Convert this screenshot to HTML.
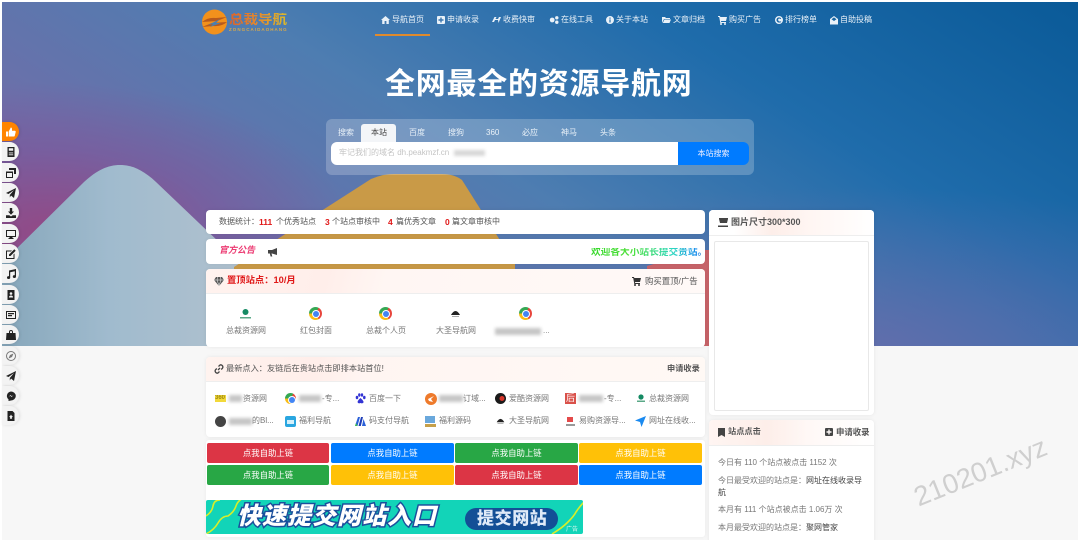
<!DOCTYPE html>
<html lang="zh"><head><meta charset="utf-8"><title>总裁导航</title>
<style>
*{box-sizing:border-box;margin:0;padding:0}
html,body{width:1080px;height:540px;overflow:hidden;background:#f7f7f7}
body{font-family:"Liberation Sans","Noto Sans CJK SC",sans-serif;color:#555}
#p{position:relative;width:1080px;height:540px;overflow:hidden;filter:blur(.3px)}
.a{position:absolute}
.t{position:absolute;white-space:nowrap;line-height:1;font-size:8px}
.w{color:#e9f1f8}
.card{position:absolute;background:#fff;border-radius:4px;box-shadow:0 0 4px rgba(0,0,0,.07)}
.pill{position:absolute;left:2px;width:17px;height:19px;background:#f3f3f3;border-radius:0 9.5px 9.5px 0;box-shadow:1px 0 3px rgba(0,0,0,.1)}
.pill svg{position:absolute;left:4px;top:4.5px;width:10px;height:10px;fill:#222}
.btn{position:absolute;height:20px;width:123px;border-radius:2px;color:#fff;font-size:8.4px;line-height:20px;text-align:center}
.r{background:#dc3545}.b{background:#007bff}.g{background:#28a745}.y{background:#ffc107}
.bl{position:absolute;background:#c6c6c6;filter:blur(1.5px);height:7px}
.chrome{position:absolute;width:13px;height:13px;border-radius:50%;background:conic-gradient(from 30deg,#e8453c 0 120deg,#f9bc15 120deg 240deg,#34a853 240deg 360deg)}
.chrome:after{content:"";position:absolute;left:3.5px;top:3.5px;width:6px;height:6px;border-radius:50%;background:#4285f4;box-shadow:0 0 0 1px #fff}
svg.i{position:absolute;fill:currentColor}
</style></head><body><div id="p">

<!-- hero -->
<div class="a" style="left:2px;top:2px;width:1076px;height:344px;overflow:hidden;background:
 radial-gradient(ellipse 300px 150px at 50px 230px,rgba(150,70,130,.9),rgba(130,80,150,.5) 55%,rgba(110,90,160,0) 100%),
 radial-gradient(ellipse 520px 160px at 850px 345px,rgba(110,105,170,.7),rgba(100,110,170,0) 100%),
 linear-gradient(212deg,#0a5a98 0%,#1f6cab 28%,#4e7db1 52%,#6b70aa 75%,#7a5e9e 100%)">
 <svg width="1076" height="344" viewBox="0 0 1076 344" style="position:absolute;left:0;top:0">
  <defs><linearGradient id="m" x1="0" x2="1" y1="0" y2="0"><stop offset="0" stop-color="#86a6ba"/><stop offset=".45" stop-color="#a0bbce"/><stop offset="1" stop-color="#b0c1ce"/></linearGradient></defs>
  <path d="M-2 263L82 180C95 168 106 163 118 163C130 163 141 168 154 180L240 262V344H-2Z" fill="url(#m)"/>
  <path d="M232 265L369 177Q380 172 392 172H440Q452 172 460 178L513 262V344H232Z" fill="#c99a47"/>
  <path d="M645 264L700 248H720V344H645Z" fill="#c8646a"/>
 </svg>
</div>
<div class="a" style="left:0;top:346px;width:1080px;height:194px;background:#f7f7f7"></div>
<div class="a" style="left:0;top:0;width:2px;height:540px;background:#fff"></div>
<div class="a" style="right:0;top:0;width:2px;height:540px;background:#fff"></div>
<div class="a" style="left:0;top:0;width:1080px;height:2px;background:#fff"></div>

<!-- logo -->
<svg class="a" style="left:202px;top:9px" width="25" height="26" viewBox="0 0 25 26"><circle cx="12.5" cy="13" r="12.5" fill="#f2911c"/><path d="M0 13Q6 8 14 9L25 8 15 12 8 12.5Z" fill="#b85a1c"/><path d="M25 13Q19 18 11 17L0 18 10 14 17 13.5Z" fill="#b85a1c"/><path d="M6 16L18 10 14 14 19 14 8 18 11 15Z" fill="#4a7fae"/></svg>
<div class="t" style="left:229px;top:13px;font-size:14.5px;font-weight:bold;background:linear-gradient(90deg,#d9622c,#e58a2c 50%,#d8b92e);-webkit-background-clip:text;background-clip:text;color:transparent">总裁导航</div>
<div class="t" style="left:229px;top:28px;font-size:4.5px;letter-spacing:1.05px;color:#d9a94a;font-weight:bold">ZONGCAIDAOHANG</div>

<!-- nav -->
<svg class="i w" style="left:381px;top:16px" width="9" height="8" viewBox="0 0 9 8"><path d="M4.5 0L9 4H7.8V8H5.4V5H3.6V8H1.2V4H0Z"/></svg><div class="t w" style="left:392px;top:16px">导航首页</div>
<svg class="i w" style="left:437px;top:16px" width="8" height="8" viewBox="0 0 8 8"><path d="M1 0H7Q8 0 8 1V7Q8 8 7 8H1Q0 8 0 7V1Q0 0 1 0ZM3.3 1.5V3.3H1.5V4.7H3.3V6.5H4.7V4.7H6.5V3.3H4.7V1.5Z"/></svg><div class="t w" style="left:447px;top:16px">申请收录</div>
<svg class="i w" style="left:492px;top:16px" width="9" height="8" viewBox="0 0 9 8"><path d="M0 6L2.5 1H4.5L3.5 3H6L7 1H9L6.5 7 6 4H3L2 6Z"/></svg><div class="t w" style="left:503px;top:16px">收费快审</div>
<svg class="i w" style="left:549px;top:16px" width="10" height="8" viewBox="0 0 10 8"><circle cx="3.2" cy="4" r="2.4"/><circle cx="7.8" cy="1.8" r="1.7"/><circle cx="7.8" cy="6.2" r="1.7"/></svg><div class="t w" style="left:561px;top:16px">在线工具</div>
<svg class="i w" style="left:606px;top:16px" width="8" height="8" viewBox="0 0 8 8"><path d="M4 0a4 4 0 1 0 0 8a4 4 0 1 0 0-8ZM3.4 1.5H4.6V2.7H3.4ZM3.4 3.4H4.6V6.5H3.4Z" fill-rule="evenodd"/></svg><div class="t w" style="left:616px;top:16px">关于本站</div>
<svg class="i w" style="left:662px;top:16px" width="9" height="8" viewBox="0 0 9 8"><path d="M0 1H3L4 2H8V3H2L0 7ZM2.4 3.5H9L7.5 7H.8Z"/></svg><div class="t w" style="left:673px;top:16px">文章归档</div>
<svg class="i w" style="left:718px;top:16px" width="9" height="9" viewBox="0 0 9 9"><path d="M0 0H2L2.3 1H9L8 5H3L3.2 6H8V7H2.3L1.2 1H0Z"/><circle cx="3" cy="8" r="1"/><circle cx="7" cy="8" r="1"/></svg><div class="t w" style="left:729px;top:16px">购买广告</div>
<svg class="i w" style="left:775px;top:16px" width="8" height="8" viewBox="0 0 8 8"><path d="M4 0a4 4 0 1 0 0 8a4 4 0 1 0 0-8ZM5.5 5.3L6.3 6Q5.4 6.6 4 6.6A2.6 2.6 0 1 1 6.2 2.5L5.3 3.1Q4.8 2.5 4 2.5A1.5 1.5 0 1 0 5.5 5.3Z" fill-rule="evenodd"/></svg><div class="t w" style="left:785px;top:16px">排行榜单</div>
<svg class="i w" style="left:830px;top:16px" width="8" height="8.5" viewBox="0 0 8 8.5"><path d="M4 0L8 3V8.5H0V3ZM1.5 3.2L4 5 6.5 3.2 4 1.4Z" fill-rule="evenodd"/></svg><div class="t w" style="left:840px;top:16px">自助投稿</div>
<div class="a" style="left:375px;top:34px;width:55px;height:1.5px;background:#e08a2c"></div>

<!-- title -->
<div class="t" style="left:385px;top:70px;font-size:30px;font-weight:bold;letter-spacing:.75px;color:#fff">全网最全的资源导航网</div>

<!-- search -->
<div class="a" style="left:326px;top:119px;width:428px;height:56px;border-radius:6px;background:rgba(255,255,255,.22)"></div>
<div class="a" style="left:361px;top:124px;width:35px;height:19px;background:#f3f5f8;border-radius:3px 3px 0 0"></div>
<div class="t w" style="left:338px;top:129px">搜索</div>
<div class="t" style="left:371px;top:129px;color:#444">本站</div>
<div class="t w" style="left:409px;top:129px">百度</div>
<div class="t w" style="left:448px;top:129px">搜狗</div>
<div class="t w" style="left:486px;top:129px">360</div>
<div class="t w" style="left:522px;top:129px">必应</div>
<div class="t w" style="left:561px;top:129px">神马</div>
<div class="t w" style="left:600px;top:129px">头条</div>
<div class="a" style="left:331px;top:142px;width:347px;height:23px;background:#fff;border-radius:6px 0 0 6px"></div>
<div class="t" style="left:339px;top:149px;color:#c4c4c4;font-size:8px">牢记我们的域名 dh.peakmzf.cn</div>
<div class="bl" style="left:454px;top:150px;width:31px;height:6px;background:#d8d8d8"></div>
<div class="a" style="left:678px;top:142px;width:71px;height:23px;background:#007bff;border-radius:0 6px 6px 0;color:#eef;font-size:8px;line-height:23px;text-align:center">本站搜索</div>

<!-- sidebar -->
<div class="pill" style="top:122px;background:#ff8400"><svg viewBox="0 0 10 10" style="fill:#fff"><path d="M0 4.5H2V9.5H0ZM2.7 4.5L4.8 .5Q6 .5 6 2V3.7H9Q10 4 9.7 5L8.7 9Q8.5 9.5 8 9.5H2.7Z"/></svg></div>
<div class="pill" style="top:142px"><svg viewBox="0 0 10 10"><path d="M1.5 0H8.5V10H1.5ZM2.8 1.2V3.8H7.2V1.2ZM2.8 5.5V6.4H7.2V5.5ZM2.8 7.4V8.3H7.2V7.4Z" fill-rule="evenodd"/></svg></div>
<div class="pill" style="top:163px"><svg viewBox="0 0 10 10"><path d="M3 0H10V6H8V2H3ZM0 3.5H7V10H0ZM1 5V9H6V5Z" fill-rule="evenodd"/></svg></div>
<div class="pill" style="top:183px"><svg viewBox="0 0 10 10"><path d="M10 0L8 10 5 7.5 3.8 9.5V7L8 2 2.5 6 0 5Z"/></svg></div>
<div class="pill" style="top:203px"><svg viewBox="0 0 10 10"><path d="M3.8 0H6.2V3.5H8L5 6.8 2 3.5H3.8ZM0 7.2H3.3L5 8.5 6.7 7.2H10V10H0Z"/></svg></div>
<div class="pill" style="top:224px"><svg viewBox="0 0 10 10"><path d="M0 1H10V8H6.5V9H7.5V10H2.5V9H3.5V8H0ZM1 2V7H9V2Z" fill-rule="evenodd"/></svg></div>
<div class="pill" style="top:244px"><svg viewBox="0 0 10 10"><path d="M0 1.5H6L5 2.5H1V9H7.5V5.5L8.5 4.5V10H0ZM3 5.5L8.3 .3 9.7 1.7 4.5 7H3Z"/></svg></div>
<div class="pill" style="top:264px"><svg viewBox="0 0 10 10"><path d="M3 1.5L10 0V7.5A1.6 1.4 0 1 1 8.8 6.2V2.2L4.2 3.2V8.5A1.6 1.4 0 1 1 3 7.2Z"/></svg></div>
<div class="pill" style="top:285px"><svg viewBox="0 0 10 10"><path d="M1.5 0H8.5V10H1.5ZM5 2.2A1.3 1.3 0 1 0 5 4.8A1.3 1.3 0 1 0 5 2.2ZM3 7.5H7Q7 5.5 5 5.5T3 7.5Z" fill-rule="evenodd"/></svg></div>
<div class="pill" style="top:305px"><svg viewBox="0 0 10 10"><path d="M0 1H10V9H0ZM1 2V8H9V2ZM2 3H8V4.2H2ZM2 5H6V6.2H2Z" fill-rule="evenodd"/></svg></div>
<div class="pill" style="top:325px"><svg viewBox="0 0 10 10"><path d="M3 3V2Q3 0 5 0T7 2V3H9.5L10 10H0L.5 3ZM4 3H6V2Q6 1 5 1T4 2Z" fill-rule="evenodd"/></svg></div>
<div class="pill" style="top:346px"><svg viewBox="0 0 10 10" style="fill:#777"><path d="M5 0a5 5 0 1 0 0 10a5 5 0 1 0 0-10ZM5 1a4 4 0 1 1 0 8a4 4 0 1 1 0-8ZM7.5 2.5L4 4 2.5 7.5 6 6Z" fill-rule="evenodd"/></svg></div>
<div class="pill" style="top:366px"><svg viewBox="0 0 10 10"><path d="M10 0L8 10 5 7.5 3.8 9.5V7L8 2 2.5 6 0 5Z"/></svg></div>
<div class="pill" style="top:386px"><svg viewBox="0 0 10 10"><path d="M5 .5A4.8 4.5 0 0 1 5 9.5L2.5 10V8.3A4.8 4.5 0 0 1 5 .5ZM2.5 6L4.5 4 5.8 5.2 7.6 4 5.6 6 4.3 4.8Z" fill-rule="evenodd"/></svg></div>
<div class="pill" style="top:406px"><svg viewBox="0 0 10 10"><path d="M1.5 0H6.5L8.5 2V10H1.5ZM5 3.5L4 5.3H3L4.2 6.6 3.8 8.2 5 7.4 6.2 8.2 5.8 6.6 7 5.3H6Z" fill-rule="evenodd"/></svg></div>

<!-- stats -->
<div class="card" style="left:206px;top:210px;width:499px;height:24px"></div>
<div class="t" style="left:219px;top:218px">数据统计：</div>
<div class="t" style="left:259px;top:218px;color:#e01818;font-weight:bold;font-size:8.5px">111</div>
<div class="t" style="left:276px;top:218px">个优秀站点</div>
<div class="t" style="left:325px;top:218px;color:#e01818;font-weight:bold;font-size:8.5px">3</div>
<div class="t" style="left:332px;top:218px">个站点审核中</div>
<div class="t" style="left:388px;top:218px;color:#e01818;font-weight:bold;font-size:8.5px">4</div>
<div class="t" style="left:396px;top:218px">篇优秀文章</div>
<div class="t" style="left:445px;top:218px;color:#e01818;font-weight:bold;font-size:8.5px">0</div>
<div class="t" style="left:452px;top:218px">篇文章审核中</div>

<!-- notice -->
<div class="card" style="left:206px;top:239px;width:499px;height:25px"></div>
<div class="t" style="left:219px;top:246px;font-size:9px;font-weight:bold;font-style:italic;color:#ec3a72">官方公告</div>
<svg class="i" style="left:268px;top:248px;color:#444" width="9" height="9" viewBox="0 0 9 9"><path d="M9 0V7L4 5.5H3.5L4.3 8.5H2.6L1.8 5.5H0V2H4Z"/></svg>
<div class="t" style="left:591px;top:248px;font-size:9.7px;font-weight:bold;background:linear-gradient(90deg,#35d82a,#4ee03a 35%,#2fd8c0 70%,#1a8af0 92%,#777);-webkit-background-clip:text;background-clip:text;color:transparent">欢迎各大小站长提交贵站。</div>

<!-- pinned -->
<div class="card" style="left:206px;top:269px;width:499px;height:78px"></div>
<div class="a" style="left:206px;top:269px;width:499px;height:25px;border-radius:4px 4px 0 0;border-bottom:1px solid #eee;background:linear-gradient(105deg,#fff3ef 0%,#ffeeea 24%,#fff6f3 36%,#fff9f7 100%)"></div>
<svg class="i" style="left:214px;top:277px;color:#555" width="10" height="9" viewBox="0 0 10 9"><path d="M2 0H8L10 3 5 9 0 3Z"/><path d="M0 3H10M3.5 0L3 3 5 8.5 7 3 6.5 0" stroke="#fff" stroke-width=".5" fill="none"/></svg>
<div class="t" style="left:227px;top:276px;font-size:9.3px;font-weight:bold;color:#e01818">置顶站点：10/月</div>
<svg class="i" style="left:632px;top:277px;color:#333" width="9" height="9" viewBox="0 0 9 9"><path d="M0 0H2L2.3 1H9L8 5H3L3.2 6H8V7H2.3L1.2 1H0Z"/><circle cx="3" cy="8" r="1"/><circle cx="7" cy="8" r="1"/></svg>
<div class="t" style="left:645px;top:277px;font-size:8.4px">购买置顶/广告</div>
<svg class="a" style="left:239px;top:307px" width="13" height="13" viewBox="0 0 13 13"><circle cx="6.5" cy="5" r="3" fill="#148a63"/><path d="M1 10H12V11.5H1Z" fill="#5aa887"/></svg>
<div class="t" style="left:226px;top:327px;color:#777">总裁资源网</div>
<div class="chrome" style="left:309px;top:307px"></div>
<div class="t" style="left:300px;top:327px;color:#777">红包封面</div>
<div class="chrome" style="left:379px;top:307px"></div>
<div class="t" style="left:366px;top:327px;color:#777">总裁个人页</div>
<svg class="a" style="left:449px;top:308px" width="13" height="11" viewBox="0 0 13 11"><path d="M2 7Q6.5-1 11 7Z" fill="#222"/><path d="M3 8H10V9H3Z" fill="#aaa"/></svg>
<div class="t" style="left:436px;top:327px;color:#777">大圣导航网</div>
<div class="chrome" style="left:519px;top:307px"></div>
<div class="bl" style="left:495px;top:328px;width:46px"></div>
<div class="t" style="left:543px;top:327px;color:#888">...</div>

<!-- newest -->
<div class="card" style="left:206px;top:357px;width:499px;height:80px"></div>
<div class="a" style="left:206px;top:357px;width:499px;height:25px;border-radius:4px 4px 0 0;border-bottom:1px solid #eee;background:linear-gradient(100deg,#fff3ef 0%,#ffeeea 22%,#fff5f2 32%,#fff9f5 100%)"></div>
<svg class="a" style="left:214px;top:364px" width="10" height="10" viewBox="0 0 10 10" fill="none" stroke="#444" stroke-width="1.3"><path d="M4 6L6 4M4.5 2.5L5.8 1.2Q7 .3 8.2 1.5T8.5 4.2L7.2 5.5M5.5 7.5L4.2 8.8Q3 9.7 1.8 8.5T1.5 5.8L2.8 4.5"/></svg>
<div class="t" style="left:226px;top:365px;font-size:8.2px">最新点入：友链后在贵站点击即排本站首位!</div>
<div class="t" style="left:667px;top:365px;font-size:8.2px;font-weight:bold;color:#555">申请收录</div>

<!-- link rows -->
<div class="t" style="left:215px;top:395px;font-size:6px;font-weight:bold;color:#a08a10;background:#f2d93a;width:11px;height:7px;line-height:7px;overflow:hidden">360</div>
<div class="bl" style="left:229px;top:395px;width:13px"></div><div class="t" style="left:243px;top:395px;color:#777">资源网</div>
<div class="chrome" style="left:285px;top:393px;width:11px;height:11px"></div>
<div class="bl" style="left:299px;top:395px;width:22px"></div><div class="t" style="left:322px;top:395px;color:#777">-专...</div>
<svg class="a" style="left:355px;top:393px" width="11" height="11" viewBox="0 0 11 11" fill="#3334d4"><ellipse cx="2" cy="4.5" rx="1.3" ry="1.7"/><ellipse cx="4.3" cy="2" rx="1.2" ry="1.7"/><ellipse cx="7" cy="2" rx="1.2" ry="1.7"/><ellipse cx="9.3" cy="4.5" rx="1.3" ry="1.7"/><path d="M5.5 5Q3 7 2.5 9Q3 11 5.5 10Q8 11 8.7 9Q8 7 5.5 5Z"/></svg>
<div class="t" style="left:369px;top:395px;color:#777">百度一下</div>
<svg class="a" style="left:425px;top:393px" width="12" height="12" viewBox="0 0 12 12"><circle cx="6" cy="6" r="6" fill="#ee7a2b"/><path d="M3 6L9 3 6 6 8 9 4 8Z" fill="#fff"/></svg>
<div class="bl" style="left:439px;top:395px;width:24px"></div><div class="t" style="left:463px;top:395px;color:#777">订域...</div>
<svg class="a" style="left:495px;top:393px" width="11" height="11" viewBox="0 0 11 11"><circle cx="5.5" cy="5.5" r="5.5" fill="#1a1a1a"/><circle cx="7" cy="5.5" r="2.5" fill="#d8352a"/></svg>
<div class="t" style="left:509px;top:395px;color:#777">爱酷资源网</div>
<div class="a" style="left:565px;top:393px;width:11px;height:11px;background:#d9514a;color:#fff;font-size:9px;line-height:11px;text-align:center">后</div>
<div class="bl" style="left:579px;top:395px;width:24px"></div><div class="t" style="left:604px;top:395px;color:#777">-专...</div>
<svg class="a" style="left:636px;top:393px" width="10" height="10" viewBox="0 0 10 10"><circle cx="5" cy="4" r="2.6" fill="#148a63"/><path d="M1 7.5H9V9H1Z" fill="#5aa887"/></svg>
<div class="t" style="left:649px;top:395px;color:#777">总裁资源网</div>

<div class="a" style="left:215px;top:416px;width:11px;height:11px;border-radius:50%;background:#444"></div>
<div class="bl" style="left:229px;top:418px;width:23px"></div><div class="t" style="left:252px;top:417px;color:#777">的Bl...</div>
<div class="a" style="left:285px;top:416px;width:11px;height:11px;border-radius:2px;background:#2aa6e0"></div><div class="a" style="left:287px;top:420px;width:7px;height:4px;background:#d4f0fb"></div>
<div class="t" style="left:299px;top:417px;color:#777">福利导航</div>
<svg class="a" style="left:355px;top:416px" width="11" height="11" viewBox="0 0 11 11"><path d="M0 10L3 1H5L2.5 10Z" fill="#2a60d8"/><path d="M3.5 10L6 1H8L5.8 10Z" fill="#1f3fb8"/><path d="M7 10L8.5 3 11 10Z" fill="#2a60d8"/><path d="M0 10L1 7 2.5 10Z" fill="#3fc04a"/></svg>
<div class="t" style="left:369px;top:417px;color:#777">码支付导航</div>
<div class="a" style="left:425px;top:416px;width:10px;height:7px;background:#6aa8dc"></div><div class="a" style="left:425px;top:424px;width:11px;height:3px;background:#c6a04a"></div>
<div class="t" style="left:439px;top:417px;color:#777">福利源码</div>
<svg class="a" style="left:495px;top:416px" width="11" height="10" viewBox="0 0 13 11"><path d="M2 7Q6.5-1 11 7Z" fill="#222"/><path d="M3 8H10V9H3Z" fill="#aaa"/></svg>
<div class="t" style="left:509px;top:417px;color:#777">大圣导航网</div>
<div class="a" style="left:567px;top:417px;width:6px;height:5px;background:#e44a4a"></div><div class="a" style="left:566px;top:424px;width:9px;height:2px;background:#999"></div>
<div class="t" style="left:579px;top:417px;color:#777">易购资源导...</div>
<svg class="a" style="left:635px;top:416px" width="11" height="11" viewBox="0 0 11 11"><path d="M11 0L6.5 11 5 6 0 4.5Z" fill="#1a8af0"/></svg>
<div class="t" style="left:649px;top:417px;color:#777">网址在线收...</div>

<!-- buttons -->
<div class="a" style="left:206px;top:440px;width:499px;height:97px;background:#fff;border-radius:3px;box-shadow:0 0 4px rgba(0,0,0,.06)"></div>
<div class="btn r" style="left:207px;top:443px;width:122px">点我自助上链</div>
<div class="btn b" style="left:331px;top:443px">点我自助上链</div>
<div class="btn g" style="left:455px;top:443px">点我自助上链</div>
<div class="btn y" style="left:579px;top:443px">点我自助上链</div>
<div class="btn g" style="left:207px;top:465px;width:122px">点我自助上链</div>
<div class="btn y" style="left:331px;top:465px">点我自助上链</div>
<div class="btn r" style="left:455px;top:465px">点我自助上链</div>
<div class="btn b" style="left:579px;top:465px">点我自助上链</div>

<!-- banner -->
<div class="a" style="left:206px;top:500px;width:377px;height:34px;background:#12d4b8;border-radius:2px;overflow:hidden">
 <svg class="a" style="left:0;top:0" width="377" height="34" viewBox="0 0 377 34" fill="none" stroke="#d8ee2a" stroke-width="1.6"><path d="M0 16Q6 12 7 6T14 0M0 34Q8 30 12 23T22 16Q28 12 30 6T38-2"/><path d="M346 34Q356 28 362 22T370 12Q374 6 378 2"/></svg>
 <div class="t" style="left:31px;top:5px;font-size:24px;font-weight:900;font-style:italic;letter-spacing:1px;color:#fff;-webkit-text-stroke:3px #1b4f9c;paint-order:stroke fill;text-shadow:1px 1px 0 #1b4f9c">快速提交网站入口</div>
 <div class="a" style="left:259px;top:8px;width:93px;height:22px;border-radius:11px;background:#134f96"></div>
 <div class="t" style="left:271px;top:10px;font-size:17px;font-weight:900;letter-spacing:.6px;color:#dfeaf8">提交网站</div>
 <div class="t" style="left:360px;top:27px;font-size:6px;color:#d8f8f0">广告</div>
</div>

<!-- right col -->
<div class="card" style="left:709px;top:210px;width:165px;height:205px"></div>
<div class="a" style="left:709px;top:210px;width:165px;height:26px;border-radius:4px 4px 0 0;border-bottom:1px solid #eee;background:linear-gradient(90deg,#fff 0%,#fff 15%,#fdeee9 38%,#fff6f3 62%,#fff 100%)"></div>
<svg class="i" style="left:718px;top:218px;color:#444" width="10" height="9" viewBox="0 0 10 9"><path d="M1 0H10V1L9 5H2L1 1ZM0 7.5H10V9H0Z"/></svg>
<div class="t" style="left:731px;top:218px;font-size:9px;font-weight:bold">图片尺寸300*300</div>
<div class="a" style="left:714px;top:241px;width:155px;height:170px;background:#fff;border:1px solid #e8e8e8;border-radius:2px"></div>

<div class="card" style="left:709px;top:420px;width:165px;height:125px"></div>
<div class="a" style="left:709px;top:420px;width:165px;height:26px;border-radius:4px 4px 0 0;border-bottom:1px solid #eee;background:linear-gradient(90deg,#fff5f2 0%,#fdeee9 35%,#fff8f6 60%,#fff 100%)"></div>
<svg class="i" style="left:718px;top:428px;color:#444" width="7" height="9" viewBox="0 0 7 9"><path d="M0 0H7V9L3.5 7 0 9Z"/></svg>
<div class="t" style="left:728px;top:428px;font-size:8.2px;font-weight:bold">站点点击</div>
<svg class="i" style="left:825px;top:428px;color:#444" width="8" height="8" viewBox="0 0 8 8"><path d="M1 0H7Q8 0 8 1V7Q8 8 7 8H1Q0 8 0 7V1Q0 0 1 0ZM3.3 1.5V3.3H1.5V4.7H3.3V6.5H4.7V4.7H6.5V3.3H4.7V1.5Z"/></svg>
<div class="t" style="left:836px;top:428px;font-size:8.4px;font-weight:bold">申请收录</div>
<div class="t" style="left:718px;top:459px;color:#777">今日有 110 个站点被点击 1152 次</div>
<div class="t" style="left:718px;top:477px;color:#777">今日最受欢迎的站点是：<span style="color:#444">网址在线收录导</span></div>
<div class="t" style="left:718px;top:489px;color:#444">航</div>
<div class="t" style="left:718px;top:506px;color:#777">本月有 111 个站点被点击 1.06万 次</div>
<div class="t" style="left:718px;top:524px;color:#777">本月最受欢迎的站点是：<span style="color:#444">聚网管家</span></div>

<!-- watermark -->
<div class="t" style="left:910px;top:458px;font-size:27.5px;color:#cfcfcf;transform:rotate(-22deg);font-weight:normal">210201.xyz</div>
</div></body></html>
